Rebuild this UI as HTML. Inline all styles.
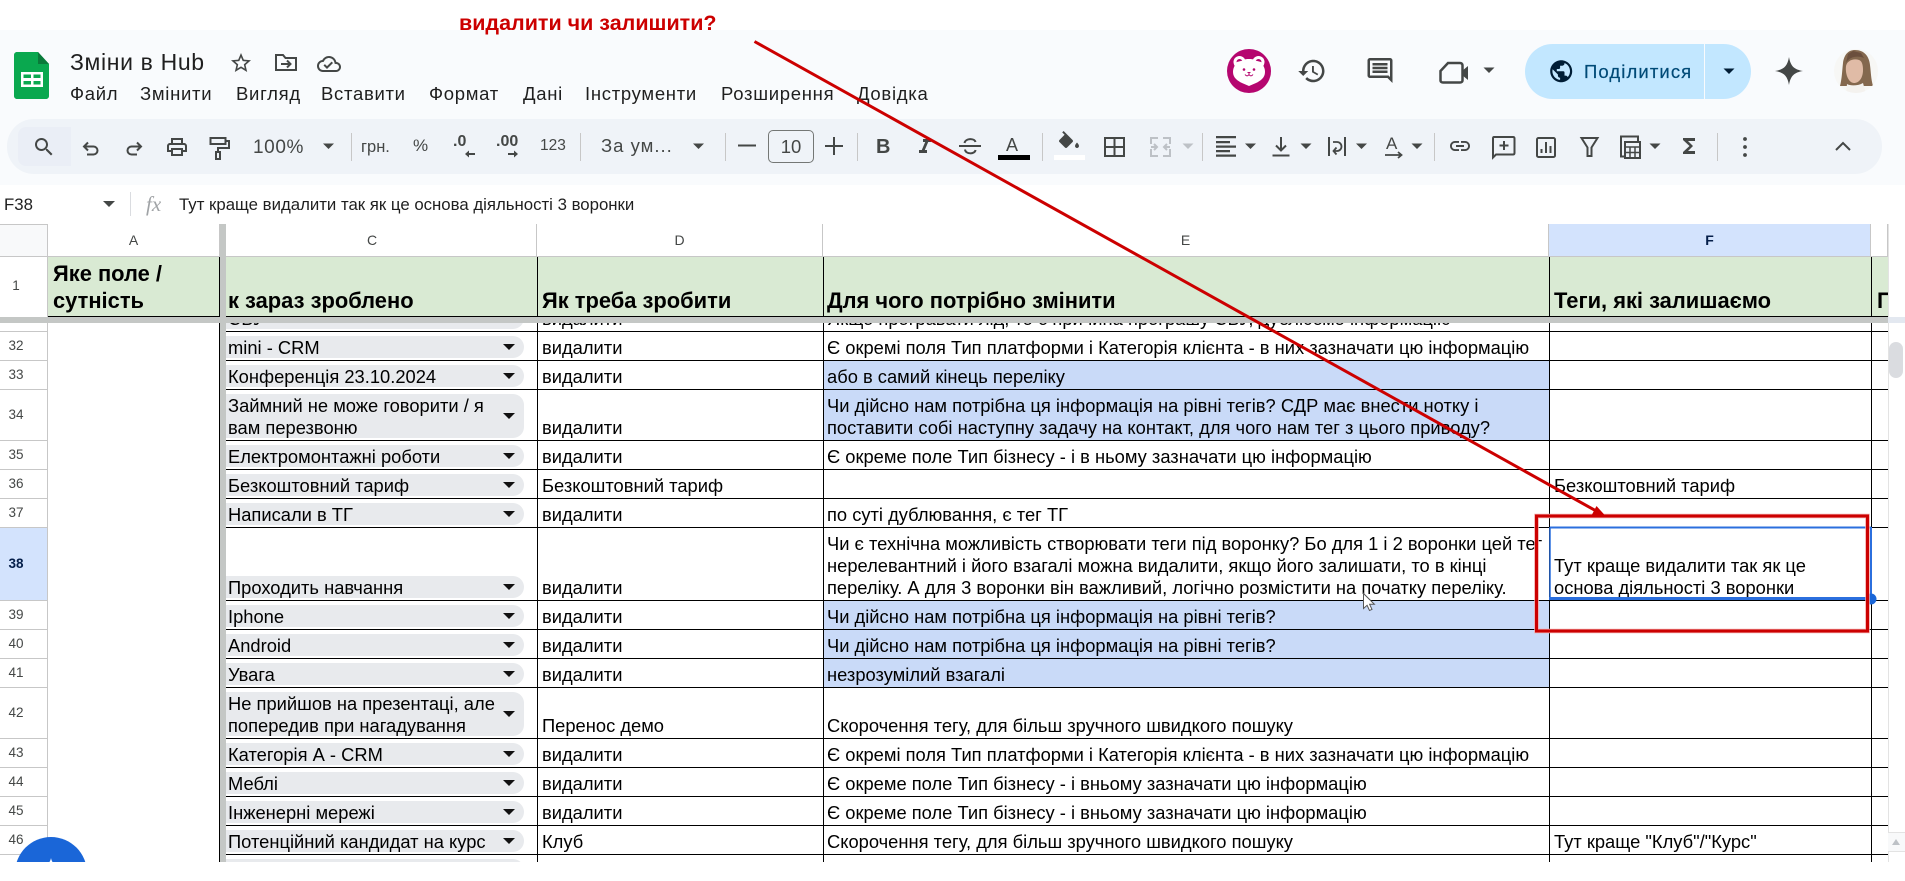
<!DOCTYPE html>
<html lang="uk"><head><meta charset="utf-8"><title>Зміни в Hub</title>
<style>
*{box-sizing:border-box}
html,body{margin:0;padding:0;width:1905px;height:862px;overflow:hidden;background:#fff;font-family:"Liberation Sans",sans-serif;color:#000}
.a{position:absolute;white-space:nowrap}
.m{position:absolute;top:84px;font-size:18.5px;letter-spacing:.7px;line-height:20px;color:#1f1f1f;white-space:nowrap}
.t{position:absolute;color:#444746;white-space:nowrap;line-height:20px}
.sep{position:absolute;top:133px;width:1px;height:28px;background:#c7c7c7}
.ch{position:absolute;top:224px;height:33px;line-height:33px;font-size:14px;color:#444746;text-align:center;border-right:1px solid #c7c7c7;border-bottom:1px solid #c7c7c7;background:#fff}
.h{position:absolute;font-size:21.9px;font-weight:bold;line-height:27.7px;white-space:nowrap;bottom:1px}
#data{position:absolute;left:0;top:0;width:1905px;height:862px;clip-path:inset(323px 0 0 0)}
.r{position:absolute;left:0;width:1888px;border-bottom:1px solid #000}
.r .n{position:absolute;left:0;top:0;bottom:-1px;width:48px;background:#fff;border-right:1px solid #c7c7c7;border-bottom:1px solid #c7c7c7}
.r .n b{position:absolute;left:0;width:32px;top:50%;margin-top:-10px;text-align:center;font:13.5px/20px "Liberation Sans",sans-serif;color:#444746}
.cov{position:absolute;left:0;top:0;bottom:-1px;width:226px;background:#fff}
.c{position:absolute;left:226px;width:298px;height:22px;bottom:2px;background:#e8eaed;border-radius:0 11px 11px 0;padding:1px 0 0 2px;font-size:18.33px;line-height:22px;white-space:nowrap}
.c.two{height:44px}
.c::after{content:"";position:absolute;right:9px;top:50%;margin-top:-3px;border-left:6px solid transparent;border-right:6px solid transparent;border-top:6px solid #111}
.d,.e,.f{position:absolute;bottom:1px;font-size:18.33px;line-height:22px;white-space:nowrap}
.d{left:542px}
.e{left:827px;width:722px;overflow:hidden}
.f{left:1554px}
.bl{position:absolute;left:824px;width:725px;top:0;bottom:0;background:#c9daf8}
.v{position:absolute;width:1px;top:257px;height:605px;background:#000}
</style></head><body>

<div class="a" style="left:0;top:30px;width:1905px;height:155px;background:#f9fbfd"></div>
<div class="a" style="left:7px;top:119px;width:1875px;height:55px;background:#eff3f8;border-radius:27px"></div>
<div class="a" style="left:18px;top:127px;width:53px;height:39px;background:#eaeef6;border-radius:8px 0 0 8px"></div>

<div class="a" style="left:459px;top:11px;font-size:21.5px;font-weight:bold;line-height:24px;color:#cc0000">видалити чи залишити?</div>

<div class="a" style="left:70px;top:48px;font-size:23px;line-height:28px;color:#1f1f1f;letter-spacing:.65px">Зміни в Hub</div>
<div class="m" style="left:70px">Файл</div>
<div class="m" style="left:140px">Змінити</div>
<div class="m" style="left:236px">Вигляд</div>
<div class="m" style="left:321px">Вставити</div>
<div class="m" style="left:429px">Формат</div>
<div class="m" style="left:523px">Дані</div>
<div class="m" style="left:585px">Інструменти</div>
<div class="m" style="left:721px">Розширення</div>
<div class="m" style="left:857px">Довідка</div>

<div class="t" style="left:253px;top:138px;font-size:19px;letter-spacing:.6px">100%</div>
<div class="t" style="left:361px;top:137px;font-size:16.5px">грн.</div>
<div class="t" style="left:413px;top:136px;font-size:17px">%</div>
<div class="t" style="left:453px;top:132px;font-size:16px;font-weight:bold">.0</div>
<div class="t" style="left:496px;top:132px;font-size:16px;font-weight:bold">.00</div>
<div class="t" style="left:540px;top:136px;font-size:15.5px">123</div>
<div class="t" style="left:601px;top:136px;font-size:18.5px;letter-spacing:1px">За ум...</div>
<div class="a" style="left:768px;top:130px;width:46px;height:33px;border:1px solid #747775;border-radius:5px;text-align:center;font-size:18.5px;line-height:32px;color:#444746">10</div>
<div class="t" style="left:876px;top:137px;font-size:20px;font-weight:bold">B</div>
<div class="t" style="left:1006px;top:135px;font-size:18px">A</div>
<div class="a" style="left:998px;top:155px;width:32px;height:5px;background:#000"></div>
<div class="a" style="left:1054px;top:155px;width:31px;height:5px;background:#fff"></div>
<div class="t" style="left:1386px;top:134px;font-size:17px">A</div>

<div class="sep" style="left:351px"></div><div class="sep" style="left:580px"></div><div class="sep" style="left:725px"></div><div class="sep" style="left:857px"></div><div class="sep" style="left:1042px"></div><div class="sep" style="left:1202px"></div><div class="sep" style="left:1434px"></div><div class="sep" style="left:1717px"></div>

<div class="a" style="left:1525px;top:44px;width:226px;height:55px;background:#c2e7ff;border-radius:28px"></div>
<div class="a" style="left:1704px;top:44px;width:1px;height:55px;background:#f9fbfd"></div>
<div class="a" style="left:1584px;top:62px;font-size:18.5px;line-height:20px;color:#004a77;letter-spacing:1.1px;-webkit-text-stroke:.2px #004a77">Поділитися</div>

<div class="a" style="left:4px;top:195px;font-size:16.8px;line-height:20px;color:#1f1f1f">F38</div>
<div class="a" style="left:130px;top:192px;width:1px;height:24px;background:#dadce0"></div>
<div class="a" style="left:146px;top:192px;font-family:'Liberation Serif',serif;font-style:italic;font-size:21px;line-height:24px;color:#a0a3a6">fx</div>
<div class="a" style="left:179px;top:195px;font-size:16.8px;line-height:20px;color:#1f1f1f">Тут краще видалити так як це основа діяльності 3 воронки</div>

<!-- header icons -->
<svg class="a" style="left:0;top:0" width="1905" height="224" viewBox="0 0 1905 224">
<g>
<path d="M17 52h21l11 12v32c0 1.700-1.300 3-3 3H17c-1.700 0-3-1.300-3-3V55c0-1.700 1.300-3 3-3z" fill="#0aa84f"/>
<path d="M38 52l11 12H38z" fill="#0a7a3a"/>
<path d="M21 72h22v15H21zM23.500 74.500v3.500h7.500v-3.500zM33.500 74.500v3.500h7v-3.500zM23.500 81v3.500h7.500V81zM33.500 81v3.500h7V81z" fill="#fff" fill-rule="evenodd"/>
</g>
<path transform="translate(229,51)" fill="#444746" d="M22 9.240l-7.190-.62L12 2 9.190 8.630 2 9.240l5.460 4.730L5.820 21 12 17.270 18.180 21l-1.630-7.030L22 9.240zM12 15.400l-3.760 2.270 1-4.280-3.320-2.880 4.380-.38L12 6.100l1.710 4.040 4.380.38-3.320 2.880 1 4.280L12 15.400z"/>
<g fill="none" stroke="#444746" stroke-width="2"><path d="M276 55h7l2.500 3H296v12h-20z"/><path d="M281 64h9M287 60.500l3.500 3.500-3.500 3.500"/></g>
<path transform="translate(317,52)" fill="#444746" d="M19.350 10.040C18.670 6.590 15.640 4 12 4 9.110 4 6.600 5.640 5.350 8.040 2.340 8.360 0 10.910 0 14c0 3.310 2.690 6 6 6h13c2.760 0 5-2.240 5-5 0-2.640-2.050-4.780-4.650-4.960zM19 18H6c-2.210 0-4-1.790-4-4 0-2.050 1.530-3.760 3.560-3.970l1.070-.11.5-.95C8.080 7.140 9.940 6 12 6c2.620 0 4.880 1.860 5.390 4.430l.3 1.500 1.530.11c1.560.1 2.780 1.410 2.780 2.960 0 1.650-1.350 3-3 3zm-9-3.820l-2.090-2.090L6.500 13.500 10 17l6.010-6.010-1.410-1.410z"/>

<!-- right header -->
<circle cx="1249" cy="71" r="22" fill="#b5066f"/>
<g fill="#fff"><circle cx="1239.500" cy="62" r="6"/><circle cx="1258.500" cy="62" r="6"/><path d="M1249 59c9 0 16 5 16 13 0 6-5 9-9 11l-7 3-7-3c-4-2-9-5-9-11 0-8 7-13 16-13z"/></g>
<circle cx="1239.500" cy="62" r="3" fill="#b5066f"/><circle cx="1258.500" cy="62" r="3" fill="#b5066f"/>
<path d="M1234 64c4-5 26-5 30 0l-2 6h-26z" fill="#fff"/>
<circle cx="1244" cy="69.500" r="1.300" fill="#b5066f"/><circle cx="1254" cy="69.500" r="1.300" fill="#b5066f"/>
<path d="M1247 72h4l-2 2z" fill="#b5066f"/>
<path d="M1245 74.500c1.500 2 2.800 1.800 4 0 1.200 1.800 2.500 2 4 0" fill="none" stroke="#b5066f" stroke-width="1"/>

<path transform="translate(1297,56) scale(1.250)" fill="#444746" d="M13 3c-4.970 0-9 4.030-9 9H1l3.890 3.890.07.14L9 12H6c0-3.870 3.130-7 7-7s7 3.130 7 7-3.130 7-7 7c-1.930 0-3.680-.79-4.940-2.060l-1.420 1.420C8.270 19.990 10.510 21 13 21c4.970 0 9-4.030 9-9s-4.030-9-9-9zm-1 5v5l4.280 2.540.72-1.210-3.500-2.080V8H12z"/>
<path transform="translate(1365,55.500) scale(1.250)" fill="#444746" d="M21.990 4c0-1.100-.89-2-1.990-2H4c-1.100 0-2 .9-2 2v12c0 1.100.9 2 2 2h14l4 4-.01-18zM20 4v13.170L18.830 16H4V4h16zM6 12h12v2H6zm0-3h12v2H6zm0-3h12v2H6z"/>
<path d="M1448 63h12c1.500 0 2.500 1 2.500 2.500v15c0 1.200-1 2-2.500 2h-17c-1.500 0-2.500-.8-2.500-2V71z" fill="none" stroke="#444746" stroke-width="2.500"/>
<path d="M1462 71l6-5v14l-6-5z" fill="#444746"/>
<path d="M1483.500 67.500h11l-5.500 5.500z" fill="#444746"/>

<path transform="translate(1548,58) scale(1.100)" fill="#001d35" d="M12 2C6.480 2 2 6.480 2 12s4.480 10 10 10 10-4.480 10-10S17.520 2 12 2zm-1 17.930c-3.950-.49-7-3.850-7-7.930 0-.62.08-1.210.21-1.790L9 15v1c0 1.100.9 2 2 2v1.930zm6.900-2.540c-.26-.81-1-1.390-1.900-1.390h-1v-3c0-.55-.45-1-1-1H8v-2h2c.55 0 1-.45 1-1V7h2c1.100 0 2-.9 2-2v-.41c2.930 1.190 5 4.060 5 7.410 0 2.080-.8 3.970-2.100 5.390z"/>
<path d="M1723.500 68.500h11l-5.500 5.500z" fill="#001d35"/>
<path d="M1789 57C1790.500 66 1794 69.500 1803 71 1794 72.500 1790.500 76 1789 85 1787.500 76 1784 72.500 1775 71 1784 69.500 1787.500 66 1789 57z" fill="#444746"/>

<clipPath id="ph"><circle cx="1856" cy="71" r="22"/></clipPath>
<circle cx="1856" cy="71" r="22" fill="#f7f7f5"/>
<g clip-path="url(#ph)">
<path d="M1855 50c-7 0-11 5-12 13-1 9-1 15-3 23h33c-2-7-2-13-3-21-1-9-6-15-15-15z" fill="#84684e"/>
<path d="M1846 66c1-5 7-8 13-6 3 1 4 5 4 10 0 8-4 13-9 13-5 0-9-8-8-17z" fill="#e0bba6"/>
<path d="M1846 63c3-6 11-8 18-5l-3-5-8-2-5 3z" fill="#6b4f3d"/>
<path d="M1847 84c3 2 11 2 16-1l3 11h-20z" fill="#f4f2ef"/>
</g>

<!-- toolbar icons -->
<path transform="translate(32,135)" fill="#444746" d="M15.500 14h-.79l-.28-.27C15.410 12.590 16 11.110 16 9.500 16 5.910 13.090 3 9.500 3S3 5.910 3 9.500 5.910 16 9.500 16c1.610 0 3.090-.59 4.230-1.570l.27.28v.79l5 4.990L20.490 19l-4.990-5zm-6 0C7.010 14 5 11.990 5 9.500S7.010 5 9.500 5 14 7.010 14 9.500 11.990 14 9.500 14z"/>
<path transform="translate(165,135)" fill="#444746" d="M19 8h-1V3H6v5H5c-1.660 0-3 1.340-3 3v6h4v4h12v-4h4v-6c0-1.660-1.340-3-3-3zM8 5h8v3H8V5zm8 12v2H8v-4h8v2zm2-2v-2H6v2H4v-4c0-.55.45-1 1-1h14c.55 0 1 .45 1 1v4h-2z"/>
<g fill="none" stroke="#444746" stroke-width="2">
<path d="M88 142.500L84 146.500 88 150.500M84 146.500H93.500A4 4 0 0 1 93.500 154.500H87"/>
<path d="M137 142.500L141 146.500 137 150.500M141 146.500H131.500A4 4 0 0 0 131.500 154.500H137"/>
<rect x="210.500" y="138" width="15" height="6"/>
<path d="M225.500 141H229V148H218V152"/>
<rect x="216" y="152" width="4" height="7"/>
<path d="M959 146H981M964.500 143c1-5 10-5 11-1M965 149.500c.5 5 10 5 10.500 .5"/>
<path d="M1105 138h19v18h-19zM1114.500 138v18M1105 147h19"/>
<path d="M1281 137v13M1276 145.500l5 5 5-5M1272.500 155.500h17"/>
<path d="M1329 137v19M1345 137v19"/>
<path d="M1333 142h4a4.500 4.500 0 0 1 0 9h-3M1336.500 147.500l-3 3.500 3 3.500" stroke-width="1.800"/>
<path d="M1385 155h16M1398 152l3.500 3-3.500 3" stroke-width="1.800"/>
<path d="M1494 137h19c1 0 1.500 .5 1.500 1.500V153c0 1-.5 1.500-1.500 1.500h-17l-3 3V138.500c0-1 .5-1.500 1-1.500z"/>
<path d="M1504 141v9M1499.500 145.500h9"/>
<rect x="1537" y="138" width="18" height="19" rx="1.500"/>
<path d="M1541.500 149v4M1546 142v11M1550.500 146v7"/>
<path d="M1581.500 138h16l-6 9.500v8.500h-4v-8.500z" />
<rect x="1621" y="136.500" width="17" height="20"/>
<rect x="1625" y="142" width="15" height="16" fill="#eff3f8"/>
<path d="M1625 147h15M1625 152.500h15M1630 147v11M1635 147v11" stroke-width="1.500"/>
<path d="M1836 150l7-7 7 7"/>
</g>
<g fill="#444746">
<path d="M465 154l4-3.500v2.500h6v2h-6v2.500z"/>
<path d="M518 154l-4-3.500v2.500h-6v2h6v2.500z"/>
<path d="M738 144.500h18v2h-18zM825 145h18v2h-18zM833 137h2v18h-2z"/>
<path transform="translate(913,135)" d="M10 4v3h2.210l-3.420 8H6v3h8v-3h-2.210l3.420-8H18V4z"/>
<path transform="translate(1056,131)" d="M16.560 8.940L7.620 0 6.210 1.410l2.380 2.380-5.150 5.150c-.59.59-.59 1.540 0 2.120l5.500 5.500c.29.29.68.44 1.060.44s.77-.15 1.060-.44l5.500-5.500c.59-.58.59-1.530 0-2.120z"/>
<path transform="translate(1058,131)" d="M19 11.500s-2 2.170-2 3.500c0 1.100.9 2 2 2s2-.9 2-2c0-1.330-2-3.500-2-3.500z"/>
<path d="M1216 136h20v2.200h-20zM1216 141h14v2.200h-14zM1216 145.500h20v2.200h-20zM1216 150h14v2.200h-14zM1216 154.500h20v2.200h-20z"/>
<path transform="translate(1448,134)" d="M3.900 12c0-1.710 1.390-3.100 3.100-3.100h4V7H7c-2.760 0-5 2.240-5 5s2.240 5 5 5h4v-1.900H7c-1.710 0-3.100-1.390-3.100-3.100zM8 13h8v-2H8v2zm9-6h-4v1.900h4c1.710 0 3.100 1.390 3.100 3.100s-1.390 3.100-3.100 3.100h-4V17h4c2.760 0 5-2.240 5-5s-2.240-5-5-5z"/>
<path transform="translate(1677,134)" d="M18 4H6v2l6.500 6L6 18v2h12v-3h-7l5-5-5-5h7z"/>
<circle cx="1745" cy="139" r="1.900"/><circle cx="1745" cy="147" r="1.900"/><circle cx="1745" cy="155" r="1.900"/>
<path d="M323 143.500h11l-5.500 5.500zM693 143.500h11l-5.500 5.500zM1245 143.500h11l-5.500 5.500zM1300.500 143.500h11l-5.500 5.500zM1356 143.500h11l-5.500 5.500zM1411.500 143.500h11l-5.500 5.500zM1649.500 143.500h11l-5.500 5.500z"/>
</g>
<path d="M1182.500 143.500h11l-5.500 5.500z" fill="#bdc1c6"/>
<g fill="none" stroke="#bdc1c6" stroke-width="2"><path d="M1151 144v-6h7M1151 149v7h7M1170 144v-6h-7M1170 149v7h-7M1151 147h5M1154 144l3 3-3 3M1170 147h-5M1167 144l-3 3 3 3"/></g>
<path d="M103 201h12l-6 6z" fill="#444746"/>
</svg>

<!-- grid top -->
<div class="a" style="left:0;top:224px;width:1905px;height:1px;background:#c7c7c7"></div>
<div class="a" style="left:0;top:225px;width:48px;height:32px;background:#f8f9fa;border-right:1px solid #c7c7c7;border-bottom:1px solid #c7c7c7"></div>
<div class="ch" style="left:48px;width:172px">A</div>
<div class="ch" style="left:226px;width:311px;padding-right:18px">C</div>
<div class="ch" style="left:537px;width:286px">D</div>
<div class="ch" style="left:823px;width:726px">E</div>
<div class="ch" style="left:1549px;width:322px;background:#d3e3fd;font-weight:bold;color:#041e49">F</div>
<div class="ch" style="left:1871px;width:17px"></div>

<!-- data -->
<div id="data">
<div class="r" style="top:303px;height:29px"><div class="cov"></div><div class="n"></div><div class="c">СБУ</div><div class="d">видалити</div><div class="e">Якщо програвати лід, то є причина програшу СБУ, дублюємо інформацію</div></div>
<div class="r" style="top:332px;height:29px"><div class="cov"></div><div class="n"><b>32</b></div><div class="c">mini - CRM</div><div class="d">видалити</div><div class="e">Є окремі поля Тип платформи і Категорія клієнта - в них зазначати цю інформацію</div></div>
<div class="r" style="top:361px;height:29px"><div class="cov"></div><div class="n"><b>33</b></div><div class="bl"></div><div class="c">Конференція 23.10.2024</div><div class="d">видалити</div><div class="e">або в самий кінець переліку</div></div>
<div class="r" style="top:390px;height:51px"><div class="cov"></div><div class="n"><b>34</b></div><div class="bl"></div><div class="c two">Займний не може говорити / я<br>вам перезвоню</div><div class="d">видалити</div><div class="e">Чи дійсно нам потрібна ця інформація на рівні тегів? СДР має внести нотку і<br>поставити собі наступну задачу на контакт, для чого нам тег з цього приводу?</div></div>
<div class="r" style="top:441px;height:29px"><div class="cov"></div><div class="n"><b>35</b></div><div class="c">Електромонтажні роботи</div><div class="d">видалити</div><div class="e">Є окреме поле Тип бізнесу - і в ньому зазначати цю інформацію</div></div>
<div class="r" style="top:470px;height:29px"><div class="cov"></div><div class="n"><b>36</b></div><div class="c">Безкоштовний тариф</div><div class="d">Безкоштовний тариф</div><div class="f">Безкоштовний тариф</div></div>
<div class="r" style="top:499px;height:29px"><div class="cov"></div><div class="n"><b>37</b></div><div class="c">Написали в ТГ</div><div class="d">видалити</div><div class="e">по суті дублювання, є тег ТГ</div></div>
<div class="r" style="top:528px;height:73px"><div class="cov"></div><div class="n" style="background:#d3e3fd"><b style="font-weight:bold;color:#041e49">38</b></div><div class="c">Проходить навчання</div><div class="d">видалити</div><div class="e">Чи є технічна можливість створювати теги під воронку? Бо для 1 і 2 воронки цей тег<br>нерелевантний і його взагалі можна видалити, якщо його залишати, то в кінці<br>переліку. А для 3 воронки він важливий, логічно розмістити на початку переліку.</div><div class="f">Тут краще видалити так як це<br>основа діяльності 3 воронки</div></div>
<div class="r" style="top:601px;height:29px"><div class="cov"></div><div class="n"><b>39</b></div><div class="bl"></div><div class="c">Iphone</div><div class="d">видалити</div><div class="e">Чи дійсно нам потрібна ця інформація на рівні тегів?</div></div>
<div class="r" style="top:630px;height:29px"><div class="cov"></div><div class="n"><b>40</b></div><div class="bl"></div><div class="c">Android</div><div class="d">видалити</div><div class="e">Чи дійсно нам потрібна ця інформація на рівні тегів?</div></div>
<div class="r" style="top:659px;height:29px"><div class="cov"></div><div class="n"><b>41</b></div><div class="bl"></div><div class="c">Увага</div><div class="d">видалити</div><div class="e">незрозумілий взагалі</div></div>
<div class="r" style="top:688px;height:51px"><div class="cov"></div><div class="n"><b>42</b></div><div class="c two">Не прийшов на презентаці, але<br>попередив при нагадування</div><div class="d">Перенос демо</div><div class="e">Скорочення тегу, для більш зручного швидкого пошуку</div></div>
<div class="r" style="top:739px;height:29px"><div class="cov"></div><div class="n"><b>43</b></div><div class="c">Категорія А - CRM</div><div class="d">видалити</div><div class="e">Є окремі поля Тип платформи і Категорія клієнта - в них зазначати цю інформацію</div></div>
<div class="r" style="top:768px;height:29px"><div class="cov"></div><div class="n"><b>44</b></div><div class="c">Меблі</div><div class="d">видалити</div><div class="e">Є окреме поле Тип бізнесу - і вньому зазначати цю інформацію</div></div>
<div class="r" style="top:797px;height:29px"><div class="cov"></div><div class="n"><b>45</b></div><div class="c">Інженерні мережі</div><div class="d">видалити</div><div class="e">Є окреме поле Тип бізнесу - і вньому зазначати цю інформацію</div></div>
<div class="r" style="top:826px;height:29px"><div class="cov"></div><div class="n"><b>46</b></div><div class="c">Потенційний кандидат на курс</div><div class="d">Клуб</div><div class="e">Скорочення тегу, для більш зручного швидкого пошуку</div><div class="f">Тут краще "Клуб"/"Курс"</div></div>
<div class="a" style="left:226px;top:859px;width:298px;height:22px;background:#e8eaed;border-radius:0 11px 11px 0"></div>
<div class="a" style="left:0;top:855px;width:48px;height:7px;border-right:1px solid #c7c7c7"></div>
</div>

<div class="v" style="left:219px"></div>
<div class="v" style="left:537px"></div>
<div class="v" style="left:823px"></div>
<div class="v" style="left:1549px"></div>
<div class="v" style="left:1871px"></div>

<!-- frozen row 1 -->
<div class="a" style="left:0;top:257px;width:48px;height:60px;background:#fff;border-right:1px solid #c7c7c7"></div>
<div class="a" style="left:0;top:276px;width:32px;text-align:center;font-size:13.5px;line-height:20px;color:#444746">1</div>
<div class="a" style="left:48px;top:257px;width:1840px;height:60px;background:#d9ead3;border-bottom:1px solid #000">
<div class="h" style="left:5px">Яке поле /<br>сутність</div>
<div class="h" style="left:180px">к зараз зроблено</div>
<div class="h" style="left:494px">Як треба зробити</div>
<div class="h" style="left:779px">Для чого потрібно змінити</div>
<div class="h" style="left:1506px">Теги, які залишаємо</div>
<div class="h" style="left:1829px;width:11px;overflow:hidden">П</div>
<i style="position:absolute;left:171px;top:0;width:1px;height:60px;background:#000"></i>
<i style="position:absolute;left:489px;top:0;width:1px;height:60px;background:#000"></i>
<i style="position:absolute;left:775px;top:0;width:1px;height:60px;background:#000"></i>
<i style="position:absolute;left:1501px;top:0;width:1px;height:60px;background:#000"></i>
<i style="position:absolute;left:1823px;top:0;width:1px;height:60px;background:#000"></i>
</div>
<!-- freeze bars -->
<div class="a" style="left:0;top:317px;width:1888px;height:6px;background:#c4c7c5"></div>
<div class="a" style="left:220px;top:224px;width:6px;height:638px;background:#c4c7c5"></div>

<!-- scrollbar -->
<div class="a" style="left:1888px;top:224px;width:17px;height:638px;background:#fff;border-left:1px solid #e3e3e3"></div>
<div class="a" style="left:1888px;top:317px;width:17px;height:6px;background:#e3e8f0"></div>
<div class="a" style="left:1889px;top:342px;width:14px;height:36px;background:#dadce0;border-radius:7px"></div>
<div class="a" style="left:1888px;top:832px;width:17px;height:20px;background:#f8f9fa;border-top:1px solid #e3e3e3;border-bottom:1px solid #e3e3e3"></div>

<!-- overlay -->
<svg class="a" style="left:0;top:0" width="1905" height="862" viewBox="0 0 1905 862">
<circle cx="51" cy="873" r="36" fill="#1a66d8"/>
<path d="M51 858c.8 4 2.500 5.800 6 6.500-3.500.8-5.200 2.500-6 6-.8-3.500-2.500-5.200-6-6 3.500-.7 5.200-2.500 6-6.500z" fill="#fff"/>
<path d="M1892 845h8l-4-6z" fill="#bdc1c6"/>
<path d="M1550 527.500h321M1871 527v72" fill="none" stroke="#2b6fde" stroke-width="2"/>
<path d="M1550 527v72" fill="none" stroke="#2b6fde" stroke-width="1.500"/>
<path d="M1549 598.500h322" fill="none" stroke="#2b6fde" stroke-width="3"/>
<circle cx="1871" cy="599" r="5.500" fill="#1a66d8"/>
<rect x="1536.500" y="516" width="331" height="115" fill="none" stroke="#f2a9a9" stroke-width="4.500"/>
<rect x="1536.500" y="516" width="331" height="115" fill="none" stroke="#cc0000" stroke-width="3"/>
<path d="M754.500 41.500L1598 512" fill="none" stroke="#cc0000" stroke-width="3"/>
<path d="M1606 516.500l-14.500-1 5-9.500z" fill="#cc0000"/>
<path d="M1363.500 593.500v15l3.600-3.200 2.400 5.200 2.500-1.100-2.400-5.100h4.800z" fill="#fff" stroke="#555" stroke-width="1"/>
</svg>
</body></html>
